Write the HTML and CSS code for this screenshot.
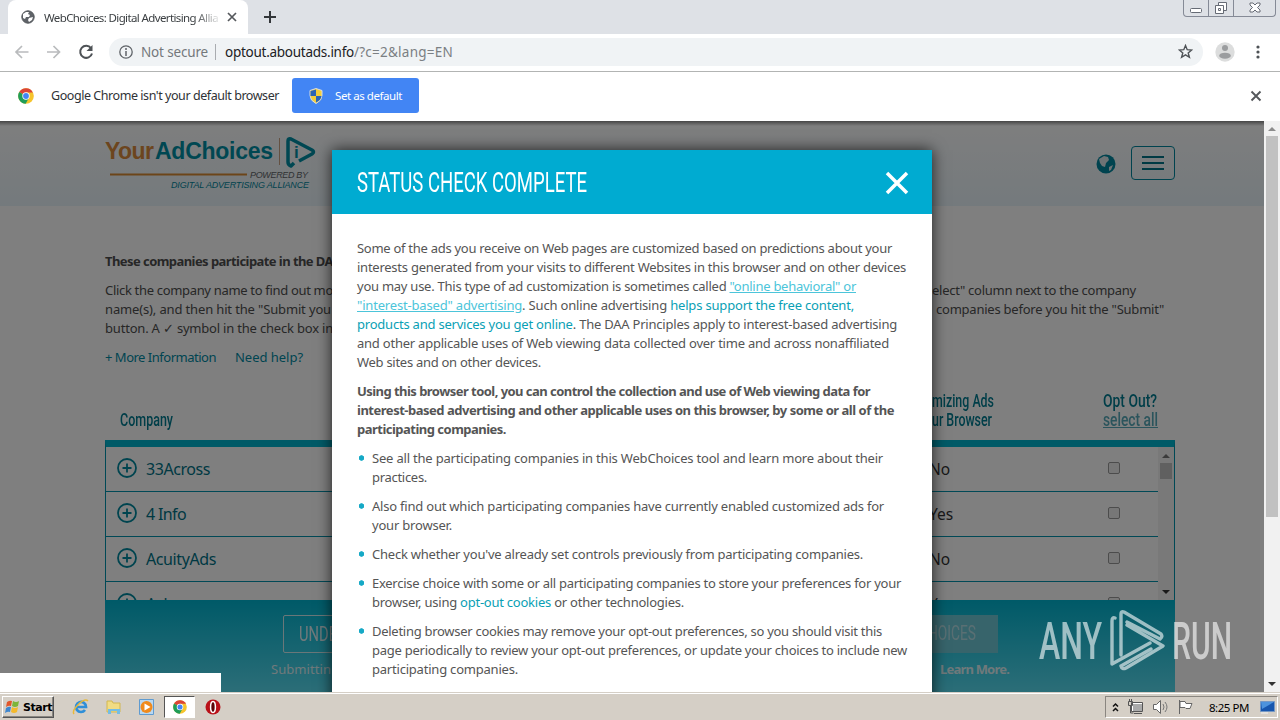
FILE: index.html
```html
<!DOCTYPE html>
<html lang="en">
<head>
<meta charset="utf-8">
<title>WebChoices: Digital Advertising Alliance</title>
<link rel="stylesheet" href="styles.css">
</head>
<body>
<div class="screen">
  <div class="tabstrip">
    <div class="tab">
      <svg class="globe" width="14" height="14" viewBox="0 0 14 14"><circle cx="7" cy="7" r="6.2" fill="#5f6368" stroke="#54585c"/><path d="M2 4l3-2 3 0-1 2 2 1-1 2-3 0-1 2-2-1zM8 8l4-1-1 3-3 2-1-2z" fill="#fff"/></svg>
      <span class="tab-title" data-fit="174">WebChoices: Digital Advertising Allia</span>
      <svg class="tab-close" width="10" height="10" viewBox="0 0 10 10"><path d="M1 1l8 8M9 1l-8 8" stroke="#55585c" stroke-width="1.7"/></svg>
    </div>
    <svg class="newtab" width="12" height="12" viewBox="0 0 12 12"><path d="M6 0v12M0 6h12" stroke="#33363a" stroke-width="2"/></svg>
    <div class="winbtns">
      <span class="wb"><svg width="14" height="14"><rect x="1.500" y="8.500" width="11" height="4" rx="1" fill="#fff" stroke="#666b75"/></svg></span>
      <span class="wb"><svg width="14" height="15"><path d="M4.500 2.500h8v8h-8z" fill="#fff" stroke="#666b75"/><path d="M1.500 5.500h8v8h-8zM4.500 8.500h2v2h-2z" fill="#fff" stroke="#666b75"/></svg></span>
      <span class="wb wide"><svg width="14" height="14"><path d="M2 3h3l2 2 2-2h3v2L9.500 7.500 12 10v2H9L7 10l-2 2H2v-2l2.500-2.500L2 5z" fill="#fff" stroke="#666b75"/></svg></span>
    </div>
  </div>
  <div class="toolbar">
    <svg class="nav" width="82" height="16" viewBox="0 0 82 16" fill="none" stroke-width="1.700"><path d="M14.500 8H2M8 2L2 8l6 6M33 8h12.500M39.500 2l6 6-6 6" stroke="#b9bbbd"/><path d="M77 4.200A6 6 0 1 0 78 9.500" stroke="#4e5256" stroke-width="2"/><path d="M78.500 1v6h-6z" fill="#4e5256"/></svg>
    <div class="omnibox">
      <svg width="14" height="14" viewBox="0 0 14 14"><circle cx="7" cy="7" r="6.200" fill="none" stroke="#5f6368" stroke-width="1.300"/><path d="M7 3v2M7 6v5" stroke="#5f6368" stroke-width="1.500"/></svg>
      <span class="secure" data-fit="67">Not secure</span>
      <span class="url"><b data-fit="129">optout.aboutads.info</b><i data-fit="99">/?c=2&amp;lang=EN</i></span>
      <svg class="star" width="15" height="15" viewBox="0 0 15 15"><path d="M7.500 1.500l1.700 4.200 4.500.3-3.500 2.900 1.200 4.400-3.900-2.500-3.900 2.500 1.200-4.400L1.300 6l4.500-.3z" fill="none" stroke="#4e5256" stroke-width="1.400"/></svg>
    </div>
    <svg class="avatar" width="20" height="20" viewBox="0 0 20 20"><circle cx="10" cy="10" r="9.700" fill="#dcdddd"/><circle cx="10" cy="6" r="3" fill="#9b9d9f"/><ellipse cx="10" cy="13.700" rx="5.800" ry="3" fill="#9b9d9f"/></svg>
    <svg width="4" height="14" viewBox="0 0 4 14" fill="#4e5256"><circle cx="2" cy="2" r="1.600"/><circle cx="2" cy="7" r="1.600"/><circle cx="2" cy="12" r="1.600"/></svg>
  </div>
  <div class="infobar">
    <svg width="16" height="16" viewBox="0 0 16 16"><use href="#chrome"/></svg>
    <span class="info-text" data-fit="228">Google Chrome isn't your default browser</span>
    <div class="default-btn">
      <svg width="14" height="16" viewBox="0 0 14 16"><path d="M7 .5l6 2v5q0 5-6 8-6-3-6-8v-5z" fill="#f3ce3a" stroke="#d9dde0"/><path d="M7 1.500v6.500H1.500V3zM7 8h5.500q-.5 4-5.500 6.500z" fill="#2c65b5"/></svg>
      <span data-fit="67">Set as default</span>
    </div>
    <svg class="info-close" width="12" height="12" viewBox="0 0 12 12"><path d="M1.500 1.500l9 9M10.500 1.500l-9 9" stroke="#55585c" stroke-width="1.900"/></svg>
  </div>

  <div class="viewport">
    <div class="page">
      <div class="site-head">
        <svg class="logo" width="212" height="56" viewBox="0 0 212 56" font-family="Liberation Sans, sans-serif">
          <text x="0" y="22" font-size="23" font-weight="bold" fill="#d98a3c" textLength="49">Your</text>
          <text x="50" y="22" font-size="23" font-weight="bold" fill="#008fa5" textLength="118">AdChoices</text>
          <path d="M174.500 1v27" stroke="#c8a284"/>
          <path d="M5 37.500h137" stroke="#d98a32" stroke-width="2"/>
          <path d="M189 26l-3 3q-3-1-3-4V4q0-3 3-2l21 11q3 2 0 4l-13 7" fill="none" stroke="#008fa5" stroke-width="3.500" stroke-linejoin="round"/>
          <text x="189" y="21" font-size="17" font-weight="bold" fill="#008fa5">i</text>
          <text x="145" y="41" font-size="9" font-style="italic" fill="#606468" textLength="58">POWERED BY</text>
          <text x="66" y="51" font-size="9" font-style="italic" fill="#00869b" textLength="138">DIGITAL ADVERTISING ALLIANCE</text>
        </svg>
        <svg class="world" width="20" height="20" viewBox="0 0 20 20"><circle cx="10" cy="10" r="9.500" fill="#00879e"/><path d="M3 5l5-3 4 1 1 3-3 3-1 4-3-1-2-3zM13 13l4-2-2 5-2 1z" fill="#dce7ea"/></svg>
        <div class="burger"><i></i><i></i><i></i></div>
      </div>
      <div class="intro">
        <p class="strong"><span data-fit="228">These companies participate in the DA</span></p>
        <div class="copy">
          <p><span data-fit="228">Click the company name to find out mo</span></p><p><span data-fit="204">elect" column next to the company</span></p>
          <p><span data-fit="226">name(s), and then hit the "Submit you</span></p><p class="in"><span data-fit="228">companies before you hit the "Submit"</span></p>
          <p><span data-fit="228">button. A ✓ symbol in the check box in</span></p>
        </div>
        <p class="links"><span data-fit="111">+ More Information</span><span data-fit="68">Need help?</span></p>
      </div>
      <div class="table-head">
        <div class="c1"><span data-squeeze="53">Company</span></div>
        <div class="c2"><span data-squeeze="62">mizing Ads</span><br><span data-squeeze="60">ur Browser</span></div>
        <div class="c3"><span data-squeeze="54">Opt Out?</span><br><u data-squeeze="55">select all</u></div>
      </div>
      <div class="table">
        <div class="rows">
          <div class="row"><svg width="20" height="20"><use href="#plus"/></svg><span class="name"><span data-fit="64">33Across</span></span><span class="ans">No</span><i class="box"></i></div>
          <div class="row"><svg width="20" height="20"><use href="#plus"/></svg><span class="name"><span data-fit="40">4 Info</span></span><span class="ans">Yes</span><i class="box"></i></div>
          <div class="row"><svg width="20" height="20"><use href="#plus"/></svg><span class="name"><span data-fit="70">AcuityAds</span></span><span class="ans">No</span><i class="box"></i></div>
          <div class="row"><svg width="20" height="20"><use href="#plus"/></svg><span class="name"><span data-fit="52">Adara</span></span><span class="ans">Yes</span><i class="box"></i></div>
        </div>
        <div class="inner-scroll"><i class="up"></i><i class="thumb"></i><i class="down"></i></div>
      </div>
      <div class="actions">
        <div class="btns"><div class="outline"><span data-squeeze="38">UNDE</span></div><div class="filled"><span data-squeeze="48">HOICES</span></div></div>
        <div class="note"><span data-fit="60">Submittin</span><b><span data-fit="69">Learn More.</span></b></div>
      </div>
      <div class="shade">
        <div class="modal">
          <div class="modal-head"><span data-squeeze="230">STATUS CHECK COMPLETE</span>
            <svg width="24" height="24" viewBox="0 0 24 24"><path d="M2 2l20 20M22 2L2 22" stroke="#fff" stroke-width="3.500"/></svg></div>
          <div class="modal-body">
            <p>
              <span data-fit="535">Some of the ads you receive on Web pages are customized based on predictions about your</span><br>
              <span data-fit="549">interests generated from your visits to different Websites in this browser and on other devices</span><br>
              <span data-fit="499">you may use. This type of ad customization is sometimes called <u>"online behavioral" or</u></span><br>
              <span data-fit="497"><u>"interest-based" advertising</u>. Such online advertising <a>helps support the free content,</a></span><br>
              <span data-fit="540"><a>products and services you get online</a>. The DAA Principles apply to interest-based advertising</span><br>
              <span data-fit="532">and other applicable uses of Web viewing data collected over time and across nonaffiliated</span><br>
              <span data-fit="184">Web sites and on other devices.</span>
            </p>
            <p class="strong">
              <span data-fit="513">Using this browser tool, you can control the collection and use of Web viewing data for</span><br>
              <span data-fit="537">interest-based advertising and other applicable uses on this browser, by some or all of the</span><br>
              <span data-fit="149">participating companies.</span>
            </p>
            <ul>
              <li><span data-fit="511">See all the participating companies in this WebChoices tool and learn more about their</span><br><span data-fit="55">practices.</span></li>
              <li><span data-fit="512">Also find out which participating companies have currently enabled customized ads for</span><br><span data-fit="80">your browser.</span></li>
              <li><span data-fit="491">Check whether you've already set controls previously from participating companies.</span></li>
              <li><span data-fit="529">Exercise choice with some or all participating companies to store your preferences for your</span><br><span data-fit="312">browser, using <a>opt-out cookies</a> or other technologies.</span></li>
              <li><span data-fit="510">Deleting browser cookies may remove your opt-out preferences, so you should visit this</span><br><span data-fit="535">page periodically to review your opt-out preferences, or update your choices to include new</span><br><span data-fit="146">participating companies.</span></li>
            </ul>
          </div>
        </div>
      </div>
      <div class="status-bubble"></div>
      <div class="watermark">
        <span data-squeeze="63">ANY</span>
        <svg width="56" height="64" viewBox="0 0 56 64" fill="none" stroke="#fff" stroke-width="3.400" stroke-linejoin="round" stroke-linecap="round"><path d="M6 9Q3 8 3 12V55L41 34M12 46V5q0-3 3-2L52 25q2 3-1 5L18 13M18 16L54 37 17 59q-4 2-5-2M12 57L42 40"/></svg>
        <span data-squeeze="60">RUN</span>
      </div>
    </div>
    <div class="scrollbar"><i class="up"></i><i class="thumb"></i><i class="down"></i></div>
  </div>

  <div class="taskbar">
    <div class="start"><svg width="16" height="16" viewBox="0 0 16 16"><path d="M2 3q3-2 5-1L6 7Q4 6 1 8z" fill="#e2572b"/><path d="M8 2q3 2 6 0l-1 5q-3 2-6 0z" fill="#7db53a"/><path d="M1 9q3-2 5-1l-1 5q-2-1-5 1z" fill="#3e86cf"/><path d="M7 8q3 2 6 0l-1 5q-3 2-6 0z" fill="#f4b92c"/></svg><b data-fit="29">Start</b></div>
    <div class="quick">
      <svg width="18" height="18" viewBox="0 0 18 18"><path d="M13 12a5 5 0 1 1 1-3H5" fill="none" stroke="#2f8fd8" stroke-width="2.700"/><path d="M2 16C-1 12 12-1 16 3" fill="none" stroke="#e8b93a" stroke-width="1.500"/></svg>
      <svg width="18" height="18" viewBox="0 0 18 18"><path d="M2 3h5l1 2h7v9H2z" fill="#f1dc83" stroke="#d2b750"/><path d="M3 16v-5h12v5h-3v-3H6v3z" fill="#74bde4"/></svg>
      <svg width="18" height="18" viewBox="0 0 18 18"><path d="M1.500 1.500h14v15h-14z" fill="#b9d8f1" stroke="#5f9bd0"/><circle cx="8.500" cy="9" r="6" fill="#f08a1c"/><path d="M6.500 5.500l6 3.500-6 3.500z" fill="#fff"/></svg>
      <span class="active"><svg width="14" height="14" viewBox="0 0 16 16"><use href="#chrome"/></svg></span>
      <svg width="18" height="18" viewBox="0 0 18 18"><circle cx="9" cy="9" r="7.500" fill="#b91119"/><ellipse cx="9" cy="9" rx="2.400" ry="5.500" fill="#5a0508" stroke="#fff" stroke-width="1.500"/></svg>
    </div>
    <div class="tray">
      <svg width="7" height="11" viewBox="0 0 7 11" fill="none" stroke="#111" stroke-width="1.500"><path d="M1 4.500L3.500 2 6 4.500M1 9l2.500-2.500L6 9"/></svg>
      <svg width="17" height="16" viewBox="0 0 17 16"><path d="M5.500 4.500h10v8h-10z" fill="#aaa" stroke="#fff"/><path d="M4.500 3.500h11v9h-11zM7 14.500h8M1.500 2.500h4v4h-4zM3.500 7v7h3M2.500 0v2M4.500 0v2" fill="none" stroke="#555"/></svg>
      <svg width="17" height="16" viewBox="0 0 17 16"><path d="M1.500 5.500h3l4-4v13l-4-4h-3z" fill="#fff" stroke="#666"/><path d="M11 5q2 3 0 6M13 3q4 5 0 10" fill="none" stroke="#777"/></svg>
      <svg width="17" height="16" viewBox="0 0 17 16"><path d="M2.500 1v14M3 2.500h5l1 2h6l-2 5H9l-1-1H3z" fill="#fff" stroke="#666"/></svg>
      <span class="clock" data-fit="40">8:25 PM</span>
      <svg width="15" height="13" viewBox="0 0 15 13"><path d="M.5.500h14v10H.5z" fill="#1756ae" stroke="#7698c4"/><path d="M1 1h13L2 8z" fill="#4d93dd"/><path d="M1 12h7" stroke="#f1f1f1"/></svg>
    </div>
  </div>
</div>
<svg width="0" height="0" class="defs">
  <symbol id="chrome" viewBox="0 0 16 16"><circle cx="8" cy="8" r="7.800" fill="#f6c42c"/><path d="M8 8L1.200 4.100A7.800 7.800 0 0 1 14.900 4.400H8z" fill="#db4437"/><path d="M8 8L1.200 4.100A7.800 7.800 0 0 0 7.700 15.800L11 9.800z" fill="#1f9d58"/><circle cx="8" cy="8" r="3.700" fill="#fff"/><circle cx="8" cy="8" r="2.900" fill="#4285f4"/></symbol>
  <symbol id="plus" viewBox="0 0 20 20"><circle cx="10" cy="10" r="9" fill="none" stroke="#00899f" stroke-width="1.800"/><path d="M10 5.500v9M5.500 10h9" stroke="#00899f" stroke-width="1.800"/></symbol>
</svg>
<script src="fit.js"></script>
</body>
</html>
```
FILE: styles.css
```css
* { box-sizing: border-box; }
body { margin: 0; overflow: hidden; font-family: "Noto Sans", sans-serif; }
p, ul { margin: 0; padding: 0; }
i { font-style: normal; }
svg { flex: none; display: block; }
.defs { position: absolute; }
[data-fit], [data-squeeze] { display: inline-block; white-space: nowrap; flex: none; }
[data-squeeze] { transform-origin: left center; font-family: Roboto, sans-serif; }
.screen { width: 1280px; height: 720px; display: flex; flex-direction: column; overflow: hidden; background: #fff; }

.tabstrip { height: 34px; flex: none; display: flex; background: #dee1e6; }
.tab { width: 240px; margin-left: 8px; background: #fff; border-radius: 8px 8px 0 0; display: flex; align-items: center; padding-left: 13px; }
.tab-title { margin-left: 9px; font-size: 11.500px; color: #3c4043; width: 178px; -webkit-mask: linear-gradient(90deg, #000 150px, transparent 178px); }
.tab-close { margin-left: 5px; }
.newtab { margin: 11px 0 0 16px; }
.winbtns { margin-left: auto; margin-right: 4px; height: 17px; display: flex; border: 1px solid #858a96; border-top: 0; border-radius: 0 0 4px 4px; }
.wb { width: 25px; display: flex; justify-content: center; border-right: 1px solid #858a96; }
.wb.wide { width: 41px; border: 0; }

.toolbar { height: 38px; flex: none; display: flex; align-items: center; padding: 0 0 2px 14px; border-bottom: 1px solid #b2b4b3; }
.omnibox { width: 1094px; height: 28px; margin-left: 13px; border-radius: 14px; background: #f0f3f5; display: flex; align-items: center; padding: 0 10px; font-size: 13.500px; }
.secure { margin-left: 8px; color: #74787c; }
.url { margin-left: 7px; padding-left: 9px; border-left: 1px solid #a9acb0; line-height: 16px; display: flex; }
.url b { font-weight: 400; color: #202124; }
.url i { color: #7b7f83; }
.star { margin-left: auto; }
.avatar { margin: 0 21px 0 12px; }

.infobar { height: 49px; flex: none; display: flex; align-items: center; padding: 0 18px 2px; background: #fff; }
.info-text { margin-left: 17px; font-size: 12.500px; color: #2f3236; }
.default-btn { width: 127px; height: 35px; margin: 0 auto 0 13px; display: flex; align-items: center; gap: 12px; padding-left: 17px; background: #4285f4; color: #fff; font-size: 11.500px; border-radius: 3px; }

.viewport { flex: 1; min-height: 0; display: flex; }
.page { position: relative; width: 1264px; overflow: hidden; background: #fff; color: #4e4e4e; }
.page::before { content: ""; position: absolute; inset: 0 0 auto; height: 5px; z-index: 3; background: linear-gradient(rgba(0,0,0,.45), transparent); }
.site-head { height: 85px; display: flex; align-items: flex-start; padding: 16px 89px 0 105px; background: linear-gradient(#fdfdfd, #e9f4fa); }
.world { margin: 17px 15px 0 auto; }
.burger { width: 44px; height: 34px; margin-top: 9px; border: 1px solid #00879e; border-radius: 4px; display: flex; flex-direction: column; align-items: center; justify-content: center; gap: 4px; }
.burger i { width: 22px; height: 2px; background: #007488; }
.intro { padding: 46px 0 0 105px; font-size: 13px; line-height: 19px; }
.strong { font-weight: 700; }
.copy { display: grid; grid-template-columns: 827px 1fr; margin-top: 10px; }
.in { padding-left: 4px; }
.links { display: flex; gap: 19px; margin-top: 10px; color: #008aa3; }
.table-head { height: 73px; padding-top: 24px; margin-left: 105px; display: flex; font-size: 18px; line-height: 19px; color: #007c91; }
.table-head [data-squeeze] { font-weight: 500; }
.c1 { padding: 19px 0 0 15px; width: 827px; }
.c2 { width: 171px; }
.c3 u { color: #56a9b8; }
.table { width: 1070px; height: 160px; margin-left: 105px; border: 1px solid #0093ac; border-top: 7px solid #00b4cf; border-bottom: 0; display: flex; overflow: hidden; }
.rows { width: 1052px; }
.row { height: 45px; display: flex; align-items: center; padding: 0 0 2px 11px; border-bottom: 1px solid #0093ac; font-size: 16px; color: #333; }
.name { width: 794px; padding: 2px 0 0 9px; color: #007286; }
.ans { width: 175px; padding-top: 2px; font-size: 15.500px; margin-left: -2px; }
.box { width: 12px; height: 12px; border: 1px solid #999; background: #eee; border-radius: 2px; margin-left: 4px; }
.inner-scroll { flex: 1; background: #f3f3f3; display: flex; flex-direction: column; align-items: center; padding: 7px 0 6px; }
.up, .down { border: 4px solid transparent; border-top: 0; border-bottom: 4px solid #777; width: 0; }
.down { border-bottom: 0; border-top: 4px solid #333; margin-top: auto; }
.inner-scroll .thumb { width: 12px; height: 16px; background: #c1c1c1; margin-top: 5px; }
.actions { width: 1070px; height: 92px; margin-left: 105px; color: #dff2f6; background: linear-gradient(#00b4d0, #58dcf0); }
.btns { display: flex; justify-content: space-between; padding: 15px 177px 0 178px; font-size: 20px; line-height: 36px; }
.outline { width: 110px; height: 38px; border: 1px solid #d4eef3; border-radius: 2px; padding-left: 15px; }
.filled { width: 110px; height: 38px; background: #6ec8d7; padding-left: 40px; color: #b4dfe6; }
.note { display: flex; justify-content: space-between; padding: 7px 166px 0 166px; font-size: 13px; line-height: 19px; }

.shade { position: absolute; inset: 0; background: rgba(0,0,0,.5); display: flex; justify-content: center; align-items: flex-start; padding-top: 29px; }
.modal { width: 600px; height: 560px; background: #fff; box-shadow: 0 0 14px rgba(0,0,0,.75); }
.modal-head { height: 64px; padding: 2px 23px 0 25px; display: flex; align-items: center; justify-content: space-between; background: #00abd1; color: #fff; font-size: 27px; }
.modal-body { padding: 25px; font-size: 13px; line-height: 19px; color: #555; }
.modal-body p, .modal-body li { margin-bottom: 10px; }
.modal-body u { color: #4cc5da; }
.modal-body a { color: #0a9fb5; }
.modal-body span { vertical-align: top; }
.modal-body li { list-style: none; padding-left: 15px; background: radial-gradient(circle at 4.500px 9px, #16a9c6 2.400px, transparent 3px); }
.status-bubble { position: absolute; left: 0; bottom: 0; width: 221px; height: 19px; background: #fff; }
.watermark { position: absolute; left: 1039px; bottom: 19px; height: 64px; display: flex; align-items: center; gap: 7px; opacity: .6; color: #fff; font-size: 52px; }
.watermark [data-squeeze] { font-weight: 500; }
.scrollbar { width: 16px; background: #f1f1f1; display: flex; flex-direction: column; align-items: center; padding: 6px 0; }
.scrollbar .up { border-bottom-color: #8c8c8c; }
.scrollbar .thumb { width: 12px; height: 381px; background: #c1c1c1; margin-top: 5px; }

.taskbar { height: 28px; flex: none; display: flex; align-items: center; background: #d5cfc6; border-top: 1px solid #d5cfc6; box-shadow: inset 0 1px #fff; padding: 1px 2px 0; }
.start { width: 52px; height: 22px; display: flex; align-items: center; gap: 2px; padding-left: 2px; border: 1px solid; border-color: #fff #555 #555 #fff; box-shadow: inset -1px -1px #8a8680; font-size: 11px; color: #000; font-family: "DejaVu Sans", sans-serif; }
.quick { display: flex; align-items: center; margin-left: 18px; gap: 15px; }
.active { width: 31px; height: 22px; margin: 0 -6px 0 -7px; display: flex; align-items: center; justify-content: center; background: #fff; border: 1px solid; border-color: #555 #fff #fff #555; }
.tray { width: 173px; height: 22px; margin-left: auto; display: flex; align-items: center; padding: 0 2px 0 6px; gap: 8px; border: 1px solid; border-color: #8a8680 #fff #fff #8a8680; font-size: 11.500px; color: #000; }
.clock { margin-left: 7px; margin-right: 3px; }
```
FILE: fit.js
```js
// Tracks or condenses each text run to its declared width.
document.querySelectorAll('[data-fit]').forEach(function (el) {
  var natural = el.getBoundingClientRect().width;
  if (el.classList.contains('tab-title')) {
    el.style.width = 'auto';
    natural = el.getBoundingClientRect().width;
    el.style.width = '';
  }
  el.style.letterSpacing = (el.dataset.fit - natural) / el.textContent.length + 'px';
});
document.querySelectorAll('[data-squeeze]').forEach(function (el) {
  var natural = el.getBoundingClientRect().width;
  el.style.transform = 'scaleX(' + el.dataset.squeeze / natural + ')';
  el.style.marginRight = el.dataset.squeeze - natural + 'px';
});
```
